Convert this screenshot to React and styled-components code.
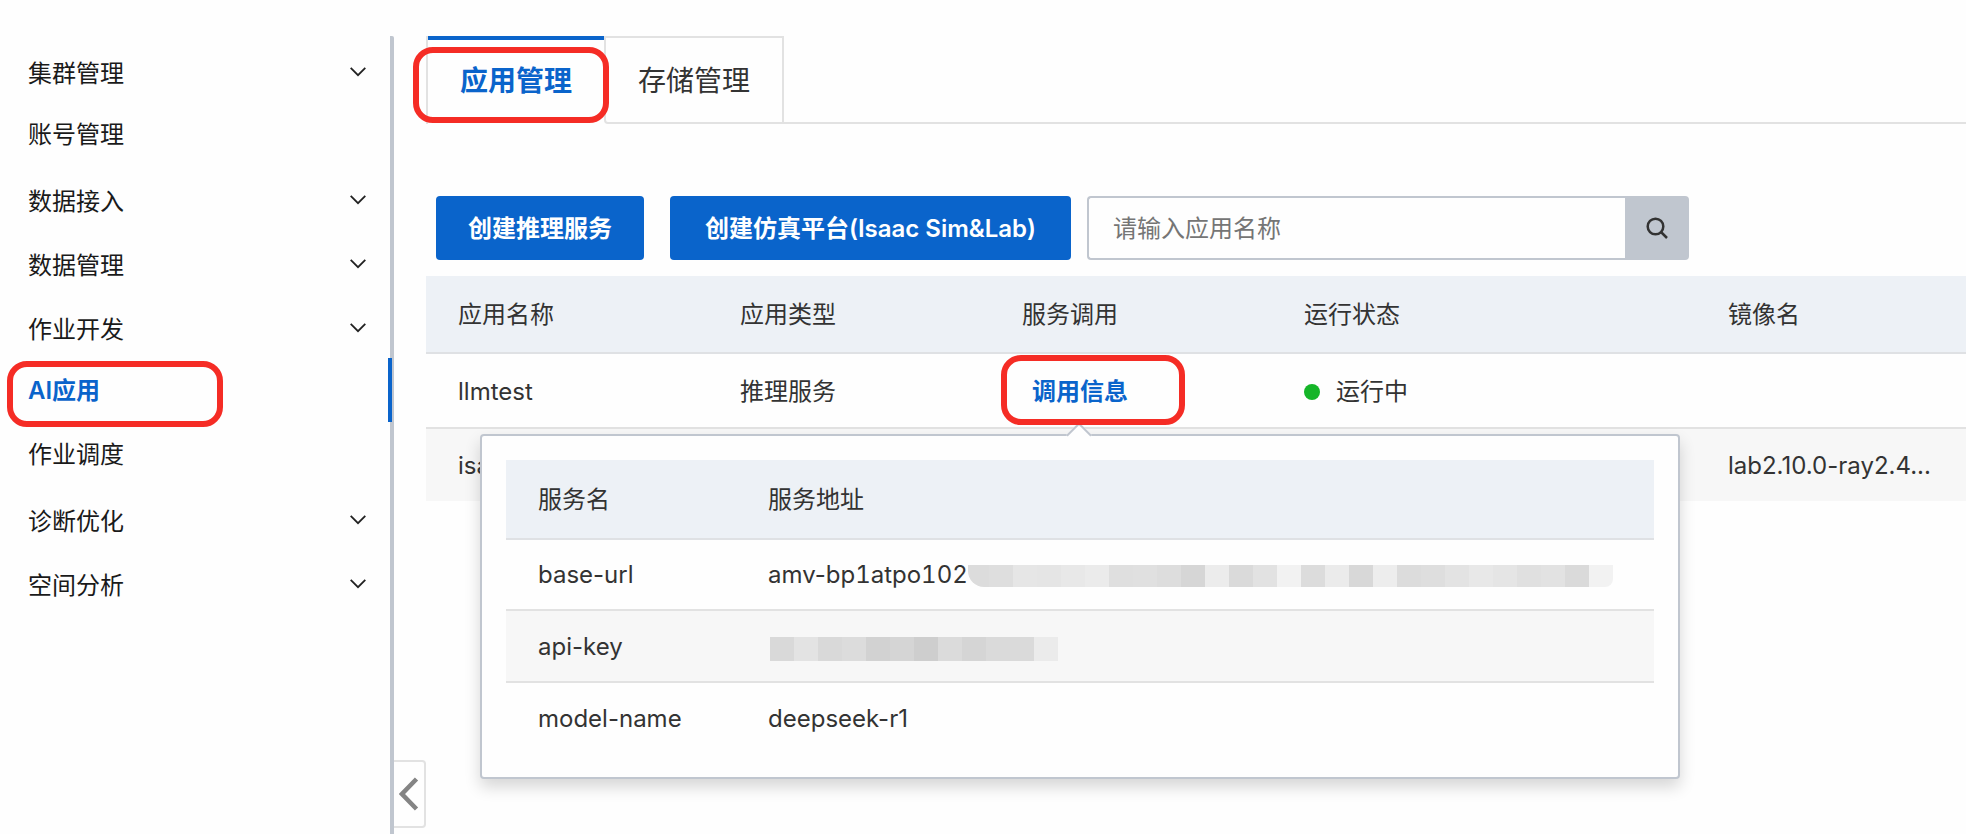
import styled, { createGlobalStyle } from "styled-components";

const GlobalStyle = createGlobalStyle`
    * {
        box-sizing: border-box;
    }
    body {
        margin: 0;
        background: #fefefe;
        color: #333;
        font-family: Inter, "Noto Sans CJK SC", sans-serif;
        font-size: 24px;
        line-height: 36px;
        overflow-x: hidden;
    }
    button, input {
        font: inherit;
    }
    a {
        text-decoration: none;
    }
`

const Page = styled.div`
    display: flex;
    min-height: 100vh;
    padding-top: 36px;
`
const Sidebar = styled.nav`
    flex: none;
    width: 394px;
    padding-top: 2px;
    border-right: 4px solid #c0c6cf;
    border-top-right-radius: 2px;
`
const MenuItem = styled.a`
    position: relative;
    display: flex;
    align-items: center;
    height: 64px;
    padding: 2px 0 0 28px;
    color: ${({ $active }) => ($active ? '#0a64cb' : '#1a1a1a')};
    font-weight: ${({ $active }) => ($active ? 600 : 400)};
`
const MenuGroup = styled.button`
    display: flex;
    align-items: center;
    justify-content: space-between;
    width: 100%;
    height: 64px;
    padding: 8px 24px 0 28px;
    border: 0;
    background: none;
    color: #1a1a1a;
    cursor: pointer;

    svg {
        margin-bottom: 4px;
    }
`
const ActiveBar = styled.span`
    position: absolute;
    top: 0;
    right: -2px;
    width: 4px;
    height: 64px;
    background: #0a64cb;
`
const Mark = styled.span`
    position: absolute;
    z-index: 3;
    top: ${({ $top }) => $top}px;
    left: ${({ $left }) => $left}px;
    width: ${({ $width }) => $width}px;
    height: ${({ $height }) => $height}px;
    border: 6px solid #f52c25;
    border-radius: 20px;
    pointer-events: none;
`
const Gutter = styled.div`
    flex: none;
    display: flex;
    align-items: flex-end;
    width: 32px;
    padding-bottom: 6px;
`
const CollapseButton = styled.button`
    display: flex;
    align-items: center;
    justify-content: center;
    width: 32px;
    height: 68px;
    padding: 0;
    border: 2px solid #e2e2e2;
    border-left: 0;
    border-radius: 0 4px 4px 0;
    background: #fefefe;
    cursor: pointer;
`
const Main = styled.main`
    flex: 1;
    min-width: 0;
`
const Tabs = styled.div`
    display: flex;
    height: 88px;
    margin-bottom: 72px;
`
const Tab = styled.button`
    position: relative;
    padding: ${({ $active }) => ($active ? '0 32px 2px' : '2px 32px 0')};
    border: 0 solid #e2e2e2;
    border-width: ${({ $active }) => ($active ? '4px 0 0' : '2px')};
    border-top-color: ${({ $active }) => ($active ? '#0a64cb' : '#e2e2e2')};
    border-bottom-left-radius: ${({ $active }) => ($active ? 0 : 4)}px;
    background: none;
    color: ${({ $active }) => ($active ? '#0a64cb' : '#333')};
    font-size: 28px;
    font-weight: ${({ $active }) => ($active ? 600 : 400)};
    cursor: pointer;
`
const TabEdge = styled.div`
    width: 2px;
    background: #e2e2e2;
`
const TabsRest = styled.div`
    flex: 1;
    border-bottom: 2px solid #e2e2e2;
`
const Toolbar = styled.div`
    display: flex;
    padding-left: 10px;
    margin-bottom: 16px;
`
const PrimaryButton = styled.button`
    min-width: ${({ $minWidth }) => $minWidth}px;
    height: 64px;
    padding: 2px 32px 0;
    margin-right: ${({ $gap }) => $gap}px;
    border: 0;
    border-radius: 4px;
    background: #0a64cb;
    color: #fff;
    font-weight: 600;
    white-space: nowrap;
    cursor: pointer;
`
const Search = styled.form`
    display: flex;
    width: 602px;
    height: 64px;
`
const SearchInput = styled.input`
    flex: 1;
    min-width: 0;
    padding: 2px 24px 0;
    border: 2px solid #c0c6cf;
    border-right: 0;
    border-radius: 4px 0 0 4px;
    background: #fefefe;
    outline: none;

    &::placeholder {
        color: #757575;
        opacity: 1;
    }
`
const SearchButton = styled.button`
    display: flex;
    align-items: center;
    justify-content: center;
    width: 64px;
    padding: 0;
    border: 0;
    border-radius: 0 4px 4px 0;
    background: #c0c6cf;
    cursor: pointer;
`
const Table = styled.table`
    width: 100%;
    table-layout: fixed;
    border-spacing: 0;
    text-align: left;
`
const Col = styled.col`
    width: ${({ $width }) => $width}px;
`
const HeadCell = styled.th`
    height: ${({ $height }) => $height}px;
    padding: 2px 0 0 32px;
    border-bottom: 2px solid #dfe1e4;
    background: #edf1f6;
    font-weight: 400;
`
const Row = styled.tr`
    background: ${({ $striped }) => ($striped ? '#f7f7f7' : 'none')};
`
const Cell = styled.td`
    height: ${({ $height }) => $height}px;
    padding: 2px 0 0 32px;
    border-bottom: ${({ $last }) => ($last ? 0 : 2)}px solid #e2e2e2;
    white-space: nowrap;
`
const CallInfo = styled.div`
    position: relative;
    display: inline-block;
    margin-left: 10px;
`
const InfoLink = styled.a`
    color: #0a64cb;
    font-weight: 600;
`
const Status = styled.span`
    display: flex;
    align-items: center;
    gap: 16px;
`
const Dot = styled.span`
    width: 16px;
    height: 16px;
    border-radius: 50%;
    background: #15b528;
`
const Balloon = styled.div`
    position: absolute;
    z-index: 2;
    top: 60px;
    left: 50%;
    width: 1200px;
    margin-left: -600px;
    padding: 24px;
    border: 2px solid #c0c6cf;
    border-radius: 4px;
    background: #fefefe;
    box-shadow: 0 8px 16px rgba(0, 0, 0, 0.16);
`
const BalloonArrow = styled.span`
    position: absolute;
    top: -10px;
    left: 50%;
    width: 18px;
    height: 18px;
    margin-left: -10px;
    border: 2px solid #c0c6cf;
    border-right: 0;
    border-bottom: 0;
    background: #fefefe;
    transform: rotate(45deg);
`
const Address = styled.div`
    display: flex;
    align-items: center;
`
const InstanceId = styled.span`
    font-variant-numeric: tabular-nums;
`
const Mosaic = styled.span`
    display: flex;
    justify-content: flex-end;
    width: ${({ $width }) => $width}px;
    height: ${({ $height }) => $height}px;
    margin: ${({ $margin }) => $margin};
    overflow: hidden;
    border-radius: ${({ $round }) => ($round ? '0 0 8px 16px' : 0)};
`
const Block = styled.span`
    flex: none;
    width: 24px;
`

const menu = [
    { name: '集群管理', group: true },
    { name: '账号管理' },
    { name: '数据接入', group: true },
    { name: '数据管理', group: true },
    { name: '作业开发', group: true },
    { name: 'AI应用', active: true },
    { name: '作业调度' },
    { name: '诊断优化', group: true },
    { name: '空间分析', group: true },
];

const urlShades = [
    220, 222, 230, 229, 232, 235, 223, 224, 221, 214, 236, 218, 226, 242,
    220, 235, 216, 237, 220, 222, 227, 232, 229, 224, 226, 218, 242,
];
const keyShades = [217, 227, 217, 220, 210, 213, 206, 219, 213, 218, 218, 235];

const Shades = ({ values }) => values.map((v, i) => (
    <Block key={i} style={{ background: `rgb(${v}, ${v}, ${v})` }} />
));

const Menu = () => (
    <Sidebar>
        {menu.map(({ name, group, active }) => group ? (
            <MenuGroup key={name} type="button" aria-expanded="false">
                {name}
                <svg width="16" height="10" viewBox="0 0 16 10" fill="none" stroke="#222" strokeWidth="1.8">
                    <path d="M.7 .9L8 8.2L15.3 .9" />
                </svg>
            </MenuGroup>
        ) : (
            <MenuItem key={name} href="#" $active={active}>
                {name}
                {active && <ActiveBar />}
                {active && <Mark $top={3} $left={7} $width={216} $height={66} />}
            </MenuItem>
        ))}
    </Sidebar>
);

const CallBalloon = () => (
    <Balloon>
        <BalloonArrow />
        <Table>
            <colgroup>
                <Col $width={230} />
                <col />
            </colgroup>
            <thead>
                <tr>
                    <HeadCell $height={80}>服务名</HeadCell>
                    <HeadCell $height={80}>服务地址</HeadCell>
                </tr>
            </thead>
            <tbody>
                <Row>
                    <Cell $height={71}>base-url</Cell>
                    <Cell $height={71}>
                        <Address>
                            amv-<InstanceId>bp1atpo102</InstanceId>
                            <Mosaic $width={645} $height={22} $margin="2px 0 0" $round>
                                <Shades values={urlShades} />
                            </Mosaic>
                        </Address>
                    </Cell>
                </Row>
                <Row $striped>
                    <Cell $height={72}>api-key</Cell>
                    <Cell $height={72}>
                        <Mosaic $width={288} $height={24} $margin="4px 0 0 2px">
                            <Shades values={keyShades} />
                        </Mosaic>
                    </Cell>
                </Row>
                <Row>
                    <Cell $height={70} $last>model-name</Cell>
                    <Cell $height={70} $last>deepseek-r1</Cell>
                </Row>
            </tbody>
        </Table>
    </Balloon>
);

const AppTable = () => (
    <Table>
        <colgroup>
            <Col $width={282} />
            <Col $width={282} />
            <Col $width={282} />
            <Col $width={424} />
            <col />
        </colgroup>
        <thead>
            <tr>
                <HeadCell $height={78}>应用名称</HeadCell>
                <HeadCell $height={78}>应用类型</HeadCell>
                <HeadCell $height={78}>服务调用</HeadCell>
                <HeadCell $height={78}>运行状态</HeadCell>
                <HeadCell $height={78}>镜像名</HeadCell>
            </tr>
        </thead>
        <tbody>
            <Row>
                <Cell $height={75}>llmtest</Cell>
                <Cell $height={75}>推理服务</Cell>
                <Cell $height={75}>
                    <CallInfo>
                        <InfoLink href="#">调用信息</InfoLink>
                        <Mark $top={-19} $left={-31} $width={184} $height={70} />
                        <CallBalloon />
                    </CallInfo>
                </Cell>
                <Cell $height={75}>
                    <Status><Dot />运行中</Status>
                </Cell>
                <Cell $height={75} />
            </Row>
            <Row $striped>
                <Cell $height={72} $last>isaac</Cell>
                <Cell $height={72} $last />
                <Cell $height={72} $last />
                <Cell $height={72} $last />
                <Cell $height={72} $last>lab2.10.0-ray2.4...</Cell>
            </Row>
        </tbody>
    </Table>
);

const App = () => (
    <>
        <GlobalStyle />
        <Page>
            <Menu />
            <Gutter>
                <CollapseButton type="button" aria-label="收起菜单">
                    <svg width="20" height="34" viewBox="0 0 20 34" fill="none" stroke="#848484" strokeWidth="4.5">
                        <path d="M17.5 2L3 17l14.5 15" />
                    </svg>
                </CollapseButton>
            </Gutter>
            <Main>
                <Tabs role="tablist">
                    <TabEdge />
                    <Tab type="button" role="tab" aria-selected="true" $active>
                        应用管理
                        <Mark $top={7} $left={-15} $width={196} $height={76} />
                    </Tab>
                    <Tab type="button" role="tab" aria-selected="false">存储管理</Tab>
                    <TabsRest />
                </Tabs>
                <Toolbar>
                    <PrimaryButton type="button" $minWidth={208} $gap={26}>创建推理服务</PrimaryButton>
                    <PrimaryButton type="button" $minWidth={401} $gap={16}>创建仿真平台(Isaac Sim&amp;Lab)</PrimaryButton>
                    <Search role="search">
                        <SearchInput type="text" placeholder="请输入应用名称" aria-label="应用名称" />
                        <SearchButton type="button" aria-label="搜索">
                            <svg width="22" height="22" viewBox="0 0 22 22" fill="none" stroke="#333" strokeWidth="2.5">
                                <circle cx="9.5" cy="9.5" r="7.8" />
                                <path d="M15 15l6 6" />
                            </svg>
                        </SearchButton>
                    </Search>
                </Toolbar>
                <AppTable />
            </Main>
        </Page>
    </>
);

export default App;
